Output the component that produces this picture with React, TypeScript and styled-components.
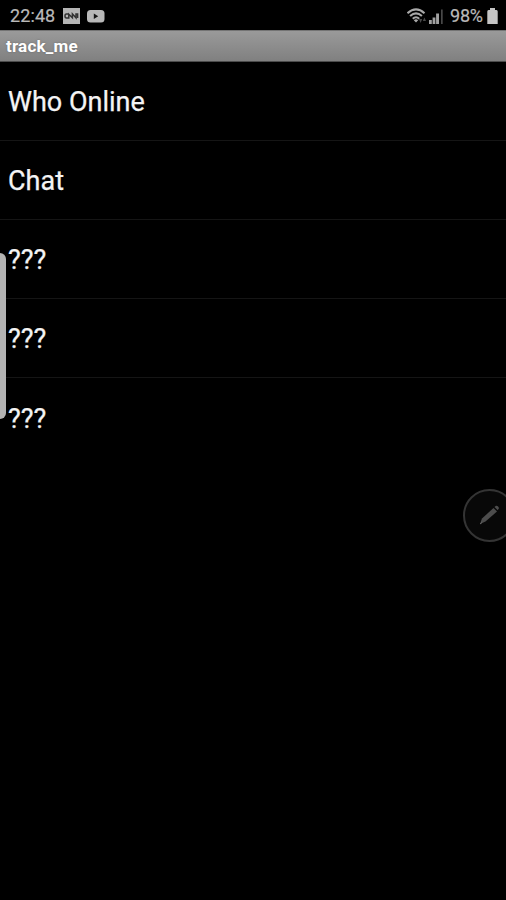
import React from "react";
import styled, { createGlobalStyle } from "styled-components";

const GlobalStyle = createGlobalStyle`
  * { box-sizing: border-box; }
  body { margin: 0; background: #000; overflow: hidden; }
`;

const Screen = styled.div`
  position: relative;
  display: flex;
  flex-direction: column;
  width: 506px;
  height: 900px;
  overflow: hidden;
  background: #000;
  color: #f4f4f4;
  font-family: Roboto, "Liberation Sans", sans-serif;
`;

const StatusBar = styled.header`
  display: flex;
  justify-content: space-between;
  height: 30px;
  padding: 2px 8px 0 10px;
  color: #b9b9b9;
  font-size: 18px;
  line-height: 28px;
  -webkit-text-stroke: 0.2px #b9b9b9;
`;

const StatusGroup = styled.div`
  display: flex;
  align-items: center;
`;

const Clock = styled.span`
  width: 53px;
  letter-spacing: 0.1px;
`;

const Battery = styled.span`
  width: 37px;
  letter-spacing: -0.2px;
`;

const TitleBar = styled.div`
  height: 32px;
  padding-left: 6px;
  border-top: 1px solid #747474;
  border-bottom: 1px solid #4c4c4c;
  background: linear-gradient(#9a9a9a, #808080);
  color: #fff;
  font-size: 17px;
  font-weight: 700;
  line-height: 30px;
  letter-spacing: 0.2px;
  text-shadow: 0 0 2px #666;
`;

const Menu = styled.ul`
  margin: 0;
  padding: 0;
  list-style: none;
`;

const MenuItem = styled.li`
  height: 79px;
  padding: 1px 0 0 8px;
  border-bottom: 1px solid #151515;
  font-size: 27px;
  line-height: 79px;
  -webkit-text-stroke: 0.25px #f4f4f4;

  &:last-child {
    padding-top: 2px;
    border-bottom: 0;
  }
`;

const EdgeHandle = styled.div`
  position: absolute;
  left: 0;
  top: 253px;
  width: 6px;
  height: 166px;
  border-radius: 0 6px 6px 0;
  background: #b3b3b3;
`;

const PenButton = styled.button`
  position: absolute;
  left: 463px;
  top: 489px;
  width: 53px;
  height: 53px;
  padding: 0;
  border: 2px solid #343434;
  border-radius: 50%;
  background: #080808;

  svg { display: block; }
`;

const NewsIcon = () => (
  <svg width="17" height="16" viewBox="0 0 17 16">
    <rect width="17" height="16" fill="#b5b5b5" />
    <path
      d="M5.6 6H3.4Q2 6 2 8T3.4 10H5.8V6.2L9.4 9.8V6L13 9.8V6H14.6V10"
      fill="none"
      stroke="#333"
      strokeWidth="1.5"
    />
  </svg>
);

const VideoIcon = () => (
  <svg width="18" height="13" viewBox="0 0 18 13">
    <rect width="17.5" height="12.5" rx="3.5" fill="#b8b8b8" />
    <path d="M6.8 3.6V9L11.2 6.3Z" fill="#151515" />
  </svg>
);

const WifiIcon = () => (
  <svg width="21" height="17" viewBox="0 0 21 17">
    <g fill="none" stroke="#a8a8a8" strokeWidth="2.1">
      <path d="M.5 5.2Q9 -2.4 17.5 5.2" />
      <path d="M3.1 8Q9 2.6 14.9 8" />
      <path d="M5.8 10.8Q9 7.6 12.2 10.8" />
    </g>
    <path d="M6.8 12.2Q9 10.4 11.2 12.2L9 14.6Z" fill="#a8a8a8" />
    <path d="M12 11H15.2L13.6 15ZM15.8 13H19L17.4 9.5Z" fill="#484848" />
  </svg>
);

const SignalIcon = () => (
  <svg width="15" height="15" viewBox="0 0 15 15">
    <path d="M0 11H2.8V15H0ZM3.6 8.5H6.4V15H3.6ZM7.1 4.5H10V15H7.1Z" fill="#a0a0a0" />
    <path d="M12 .5H13.7V15H12Z" fill="#484848" />
  </svg>
);

const BatteryIcon = () => (
  <svg width="11" height="16" viewBox="0 0 11 16">
    <path d="M3 0H8V2H9.5Q10.7 2 10.7 3.5V16H.3V3.5Q.3 2 1.5 2H3Z" fill="#c5c5c5" />
  </svg>
);

const PencilIcon = () => (
  <svg width="49" height="49" viewBox="0 0 49 49">
    <path d="M15 33L17 27.5L28.5 17L32 20.5L20.5 30.5Z" fill="#4d4d4d" />
    <path d="M29.5 16L31 14.8Q33 14.5 34 17L32.8 19.3Z" fill="#4d4d4d" />
    <path d="M15 33L17 31.5" stroke="#666" strokeWidth="1" />
  </svg>
);

const IconSlot = styled.span<{ $width: number }>`
  display: flex;
  align-items: center;
  width: ${({ $width }) => $width}px;
  height: 28px;
`;

const items = ["Who Online", "Chat", "???", "???", "???"];

export default function App() {
  return (
    <>
      <GlobalStyle />
      <Screen>
        <StatusBar>
          <StatusGroup>
            <Clock>22:48</Clock>
            <IconSlot $width={24}><NewsIcon /></IconSlot>
            <IconSlot $width={18}><VideoIcon /></IconSlot>
          </StatusGroup>
          <StatusGroup>
            <IconSlot $width={22}><WifiIcon /></IconSlot>
            <IconSlot $width={21}><SignalIcon /></IconSlot>
            <Battery>98%</Battery>
            <IconSlot $width={11}><BatteryIcon /></IconSlot>
          </StatusGroup>
        </StatusBar>
        <TitleBar>track_me</TitleBar>
        <Menu>
          {items.map((label, index) => (
            <MenuItem key={index}>{label}</MenuItem>
          ))}
        </Menu>
        <EdgeHandle />
        <PenButton aria-label="Edit"><PencilIcon /></PenButton>
      </Screen>
    </>
  );
}
